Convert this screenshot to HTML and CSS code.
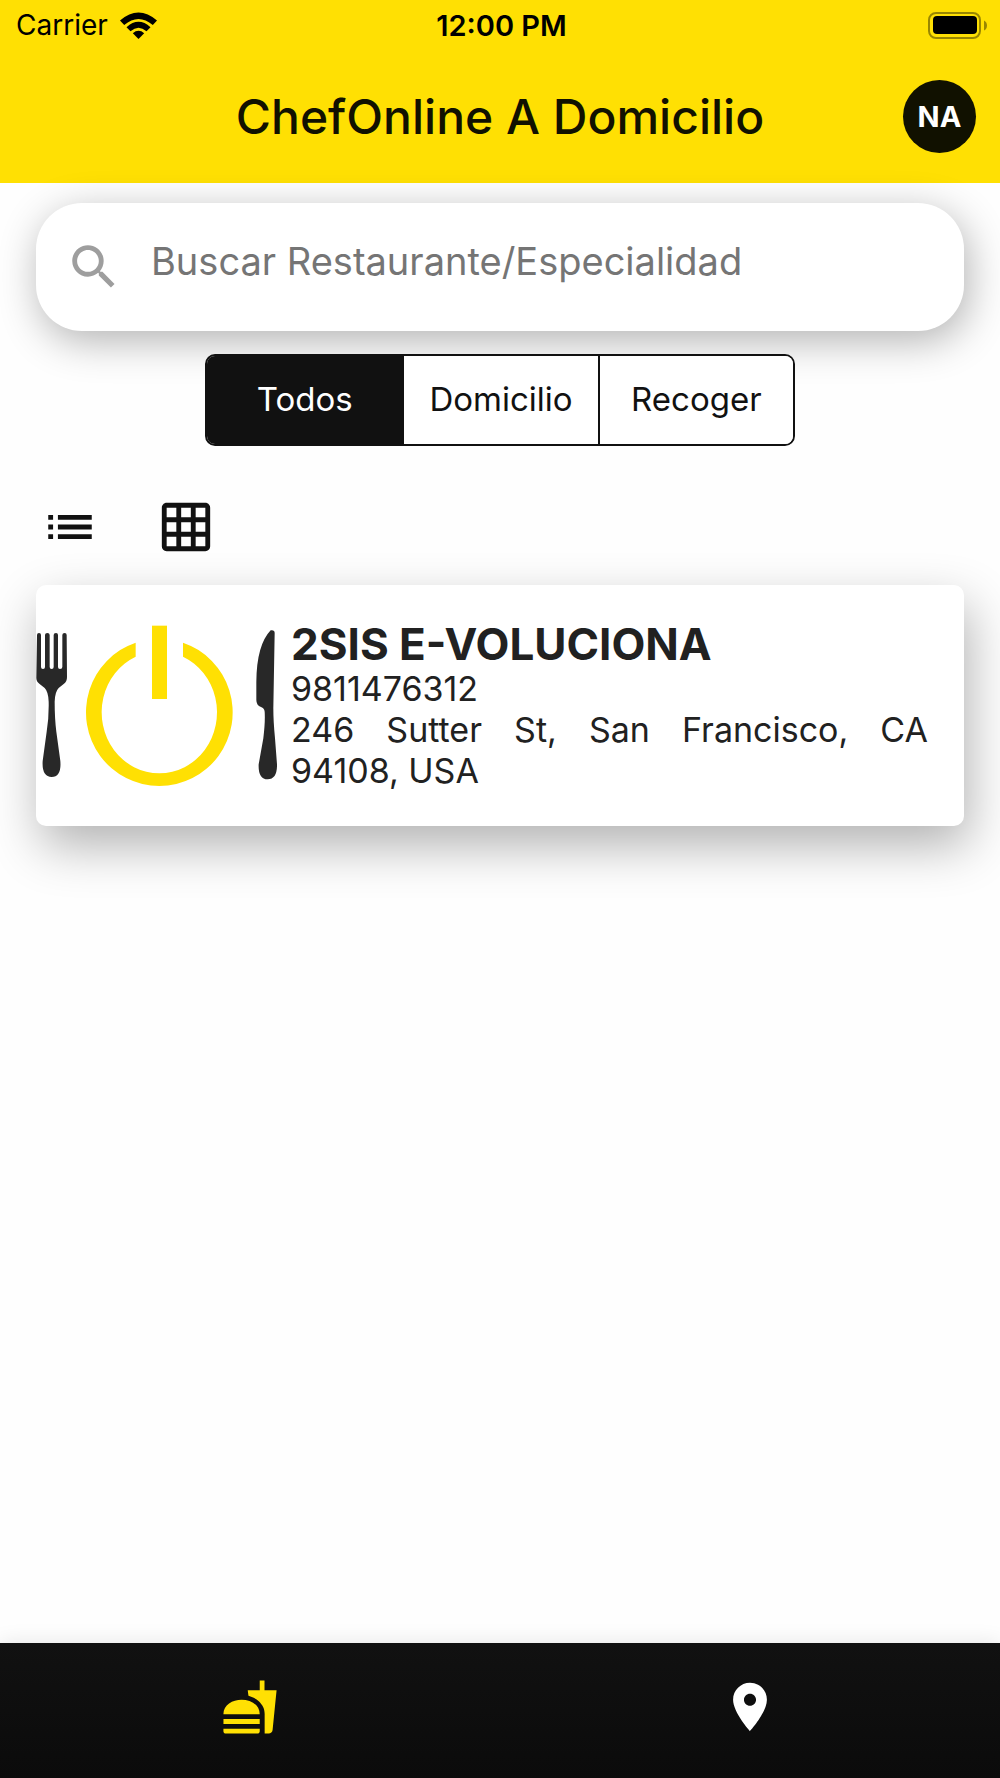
FILE: index.html
```html
<!DOCTYPE html>
<html lang="es">
<head>
    <meta charset="UTF-8">
    <meta name="viewport" content="width=device-width, initial-scale=1.0">
    <title>ChefOnline A Domicilio</title>
    <link rel="stylesheet" href="styles.css">
</head>
<body>
    <header class="header">
        <div class="status-bar">
            <div class="carrier">
                <span>Carrier</span>
                <svg class="wifi" viewBox="0 0 37 27" aria-hidden="true">
                    <path d="M0 8.500Q18.500-7.500 37 8.500L32.800 13Q18.500 1 4.200 13Z"/>
                    <path d="M6.500 15.200Q18.500 4.500 30.500 15.200L26.500 19.200Q18.500 12.200 10.500 19.200Z"/>
                    <path d="M12.800 21.200Q18.500 16.400 24.200 21.200L18.500 27Z"/>
                </svg>
            </div>
            <span class="time">12:00 PM</span>
            <svg class="battery" viewBox="0 0 59 27" aria-hidden="true">
                <rect class="battery-case" x="1" y="1" width="51" height="25" rx="7"/>
                <rect x="5" y="4" width="44" height="18" rx="4"/>
                <path class="battery-tip" d="M56 8.500Q59 10 59 13.500T56 18.500Z"/>
            </svg>
        </div>
        <div class="app-bar">
            <h1>ChefOnline A Domicilio</h1>
            <button type="button" class="avatar">NA</button>
        </div>
    </header>

    <main class="content">
        <form class="search" role="search">
            <svg class="icon" viewBox="0 0 24 24" aria-hidden="true">
                <path d="M15.500 14h-.79l-.28-.27C15.410 12.590 16 11.110 16 9.500 16 5.910 13.090 3 9.500 3S3 5.910 3 9.500 5.910 16 9.500 16c1.610 0 3.090-.59 4.230-1.570l.27.28v.79l5 4.990L20.490 19l-4.990-5zm-6 0C7.010 14 5 11.990 5 9.500S7.010 5 9.500 5 14 7.010 14 9.500 11.990 14 9.500 14z"/>
            </svg>
            <input type="text" id="search-text" aria-label="Buscar" placeholder="Buscar Restaurante/Especialidad">
        </form>

        <div class="filters">
            <button type="button" class="active">Todos</button>
            <button type="button">Domicilio</button>
            <button type="button">Recoger</button>
        </div>

        <div class="views">
            <button type="button" aria-label="Lista">
                <svg class="icon" viewBox="0 0 24 24" aria-hidden="true">
                    <path d="M3 13h2v-2H3v2zm0 4h2v-2H3v2zm0-8h2V7H3v2zm4 4h14v-2H7v2zm0 4h14v-2H7v2zM7 7v2h14V7H7z"/>
                </svg>
            </button>
            <button type="button" aria-label="Cuadrícula">
                <svg class="icon" viewBox="0 0 24 24" aria-hidden="true">
                    <path d="M20 2H4c-1.100 0-2 .9-2 2v16c0 1.100.9 2 2 2h16c1.100 0 2-.9 2-2V4c0-1.100-.9-2-2-2zM8 20H4v-4h4v4zm0-6H4v-4h4v4zm0-6H4V4h4v4zm6 12h-4v-4h4v4zm0-6h-4v-4h4v4zm0-6h-4V4h4v4zm6 12h-4v-4h4v4zm0-6h-4v-4h4v4zm0-6h-4V4h4v4z"/>
                </svg>
            </button>
        </div>

        <article class="card">
            <svg class="logo" viewBox="0 0 723 723" aria-hidden="true">
                <!-- fork -->
                <path class="cutlery" d="M3 150Q3 144 9 144Q15 144 15 150V246Q15 252 21 252Q27 252 27 246V150Q27 144 34 144Q41 144 41 150V246Q41 252 47 252Q53 252 53 246V150Q53 144 60 144Q66 144 66 150V246Q66 252 72 252Q79 252 79 246V150Q79 144 86 144Q92 144 92 150L93 276Q93 290 84 296L68 309Q57 320 56 350Q56 400 61 440L73 528Q77 575 47 576Q17 575 20 528L32 440Q39 400 38 350Q37 320 26 309L10 296Q0 290 1 276Z"/>
                <!-- power symbol -->
                <path class="power" d="M299 173A220 221 0 1 0 441 173V215A173 183 0 1 1 299 215Z"/>
                <rect class="power" x="348" y="122" width="45" height="220"/>
                <!-- knife -->
                <path class="cutlery" d="M704 136Q716 134 716 144L712 370Q712 410 717 460L723 538Q724 582 695 583Q666 582 668 538L682 460Q688 410 686 380Q685 370 675 366Q661 361 661 345V290Q662 180 704 136Z"/>
            </svg>
            <div class="info">
                <h2>2SIS E-VOLUCIONA</h2>
                <p>9811476312</p>
                <p>246 Sutter St, San Francisco, CA 94108,&nbsp;USA</p>
            </div>
        </article>
    </main>

    <nav class="tab-bar">
        <a href="#" class="active" aria-label="Restaurantes">
            <svg class="icon" viewBox="0 0 24 24" aria-hidden="true">
                <path d="M18.060 22.990h1.660c.84 0 1.530-.64 1.630-1.460L23 5.050h-5V1h-1.970v4.050h-4.970l.3 2.340c1.710.47 3.310 1.320 4.270 2.260 1.440 1.420 2.430 2.890 2.430 5.290v8.050zM1 21.990V21h15.030v.99c0 .55-.45 1-1.010 1H2.010c-.56 0-1.010-.45-1.010-1zm15.030-7c0-8-15.030-8-15.030 0h15.030zM1.020 17h15v2h-15z"/>
            </svg>
        </a>
        <a href="#" aria-label="Ubicación">
            <svg class="icon" viewBox="0 0 24 24" aria-hidden="true">
                <path d="M12 2C8.130 2 5 5.130 5 9c0 5.250 7 13 7 13s7-7.750 7-13c0-3.870-3.130-7-7-7zm0 9.500c-1.380 0-2.500-1.120-2.500-2.500s1.120-2.500 2.500-2.500 2.500 1.120 2.500 2.500-1.120 2.500-2.500 2.500z"/>
            </svg>
        </a>
    </nav>
</body>
</html>
```
FILE: styles.css
```css
* {
    box-sizing: border-box;
}

body {
    font-family: Inter, "Liberation Sans", sans-serif;
    margin: 0;
    min-height: 100vh;
    display: flex;
    flex-direction: column;
    background-color: #fefefe;
    color: #212121;
}

h1,
h2,
p {
    margin: 0;
}

button {
    font-family: inherit;
    border: none;
    padding: 0;
    cursor: pointer;
}

.icon {
    display: block;
    width: 58px;
    height: 58px;
    fill: currentColor;
}

/* Header */
.header {
    background-color: #ffe003;
}

.status-bar {
    display: grid;
    grid-template-columns: 1fr auto 1fr;
    align-items: center;
    height: 50px;
    padding: 0 13px 0 16px;
    font-size: 28px;
    color: #000;
}

.carrier {
    display: flex;
    align-items: center;
    gap: 12px;
}

.wifi {
    width: 37px;
    height: 27px;
}

.time {
    font-size: 29px;
    font-weight: 600;
}

.battery {
    width: 59px;
    height: 27px;
    justify-self: end;
}

.battery-case {
    fill: none;
    stroke: #000;
    stroke-width: 2;
    opacity: 0.4;
}

.battery-tip {
    opacity: 0.4;
}

.app-bar {
    display: grid;
    grid-template-columns: 1fr auto 1fr;
    align-items: center;
    height: 133px;
    padding: 0 24px;
}

.app-bar h1 {
    grid-column: 2;
    font-size: 48px;
    font-weight: 500;
    color: #111100;
}

.avatar {
    justify-self: end;
    width: 73px;
    height: 73px;
    border-radius: 50%;
    background-color: #111100;
    color: #fff;
    font-size: 29px;
    font-weight: 700;
}

/* Content */
.content {
    flex: 1;
    padding: 20px 36px;
}

.search {
    display: flex;
    align-items: center;
    gap: 28px;
    height: 128px;
    padding: 0 29px;
    border-radius: 46px;
    background-color: #fff;
    box-shadow: 4px 10px 40px rgba(0, 0, 0, 0.3);
    color: #9e9e9e;
}

.search input {
    flex: 1;
    min-width: 0;
    border: none;
    outline: none;
    padding: 0 0 12px;
    background: none;
    font-family: inherit;
    font-size: 38px;
    color: #212121;
}

.search input::placeholder {
    color: #757575;
    opacity: 1;
}

.filters {
    position: relative;
    display: grid;
    grid-template-columns: repeat(3, 1fr);
    width: 590px;
    max-width: 100%;
    height: 92px;
    margin: 23px auto 0;
    border: 2px solid #111;
    border-radius: 10px;
    overflow: hidden;
}

.filters button {
    padding-bottom: 2px;
    background-color: #fff;
    color: #111;
    font-size: 33px;
}

.filters button + button {
    border-left: 2px solid #111;
}

.filters .active {
    background-color: #111;
    color: #fff;
}

.views {
    display: flex;
    gap: 58px;
    margin: 52px 5px 29px;
}

.views button {
    background: none;
    color: #111;
}

.card {
    display: flex;
    align-items: center;
    gap: 14px;
    padding-right: 36px;
    border-radius: 10px;
    background-color: #fff;
    box-shadow: 5px 20px 50px rgba(0, 0, 0, 0.3);
}

.logo {
    flex: none;
    width: 241px;
    height: 241px;
}

.cutlery {
    fill: #282828;
}

.power {
    fill: #ffe003;
}

.info {
    flex: 1;
    font-size: 34px;
    line-height: 41px;
    text-align: justify;
}

.info h2 {
    font-size: 44px;
    line-height: 47px;
    font-weight: 700;
}

/* Bottom tabs */
.tab-bar {
    display: grid;
    grid-template-columns: 1fr 1fr;
    justify-items: center;
    padding: 35px 0 42px;
    background: linear-gradient(#111, #0b0b0b);
    box-shadow: 0 0 20px rgba(0, 0, 0, 0.1);
}

.tab-bar a {
    color: #fff;
}

.tab-bar .active {
    color: #ffe003;
}
```
